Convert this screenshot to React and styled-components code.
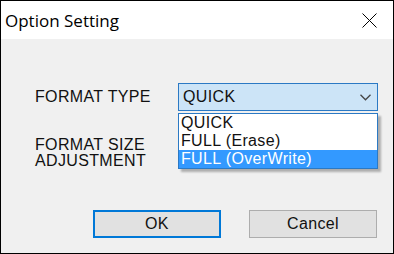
import React from 'react';
import styled, { createGlobalStyle } from 'styled-components';

const GlobalStyle = createGlobalStyle`
  body {
    margin: 0;
    background: #ffffff;
  }
`;

const Window = styled.div`
  width: 394px;
  height: 254px;
  box-sizing: border-box;
  border: 1px solid #000;
  display: flex;
  flex-direction: column;
  font-family: "Liberation Sans", Arial, sans-serif;
  letter-spacing: 0.35px;
`;

const TitleBar = styled.div`
  height: 38px;
  flex: none;
  background: #fff;
  display: flex;
  align-items: center;
  justify-content: space-between;
  padding: 0 16px 0 4px;
`;

const Title = styled.span`
  font-family: "Open Sans", "Noto Sans", sans-serif;
  font-size: 17px;
  letter-spacing: 0;
  color: #000;
  margin-top: 1px;
`;

const CloseIcon = styled.svg`
  width: 15px;
  height: 15px;
  margin-top: 1px;
`;

const Body = styled.div`
  flex: 1;
  background: #f0f0f0;
  padding: 44px 0 0 34px;
`;

const FieldRow = styled.div`
  display: grid;
  grid-template-columns: 143px 200px;
  align-items: center;
  margin-top: ${(p) => p.$gap || 0}px;
`;

const Label = styled.div`
  font-size: 16px;
  line-height: 16px;
  color: #111;
  align-self: ${(p) => (p.$top ? 'start' : 'center')};
`;

const ComboWrap = styled.div`
  position: relative;
`;

const Combo = styled.div`
  height: 28px;
  box-sizing: border-box;
  border: 1px solid #2b79c4;
  background: #cce4f7;
  display: flex;
  align-items: center;
  justify-content: space-between;
  padding: 0 6px 0 4px;
  font-size: 16px;
  color: #111;
`;

const Dropdown = styled.ul`
  position: absolute;
  top: 30px;
  left: 0;
  width: 200px;
  box-sizing: border-box;
  margin: 0;
  padding: 0;
  list-style: none;
  background: #fff;
  border: 1px solid #2b79c4;
  box-shadow: 3px 3px 2px rgba(0, 0, 0, 0.28);
  z-index: 2;
`;

const Option = styled.li`
  height: 18px;
  line-height: 18px;
  padding-left: 2px;
  font-size: 16px;
  color: ${(p) => (p.$active ? '#fff' : '#111')};
  background: ${(p) => (p.$active ? '#3399ff' : 'transparent')};
`;

const ButtonRow = styled.div`
  display: flex;
  gap: 28px;
  margin: 41px 0 0 58px;
`;

const Button = styled.button`
  width: 128px;
  height: 28px;
  box-sizing: border-box;
  background: #e1e1e1;
  border: ${(p) => (p.$default ? '2px solid #0078d7' : '1px solid #adadad')};
  font-family: "Liberation Sans", Arial, sans-serif;
  font-size: 16px;
  letter-spacing: 0.35px;
  color: #111;
  padding: 0;
`;

const options = ['QUICK', 'FULL (Erase)', 'FULL (OverWrite)'];

export default function App() {
  return (
    <>
      <GlobalStyle />
      <Window>
        <TitleBar>
          <Title>Option Setting</Title>
          <CloseIcon viewBox="0 0 15 15">
            <path d="M0.5 0.5 L14.5 14.5 M14.5 0.5 L0.5 14.5" stroke="#000" strokeWidth="1" fill="none" />
          </CloseIcon>
        </TitleBar>
        <Body>
          <FieldRow>
            <Label>FORMAT TYPE</Label>
            <ComboWrap>
              <Combo>
                <span>QUICK</span>
                <svg width="11" height="7" viewBox="0 0 11 7">
                  <path d="M0.5 0.8 L5.5 5.8 L10.5 0.8" stroke="#444" strokeWidth="1.3" fill="none" />
                </svg>
              </Combo>
              <Dropdown>
                {options.map((o, i) => (
                  <Option key={o} $active={i === 2}>{o}</Option>
                ))}
              </Dropdown>
            </ComboWrap>
          </FieldRow>
          <FieldRow $gap={26}>
            <Label $top>FORMAT SIZE<br />ADJUSTMENT</Label>
            <div />
          </FieldRow>
          <ButtonRow>
            <Button $default>OK</Button>
            <Button>Cancel</Button>
          </ButtonRow>
        </Body>
      </Window>
    </>
  );
}
